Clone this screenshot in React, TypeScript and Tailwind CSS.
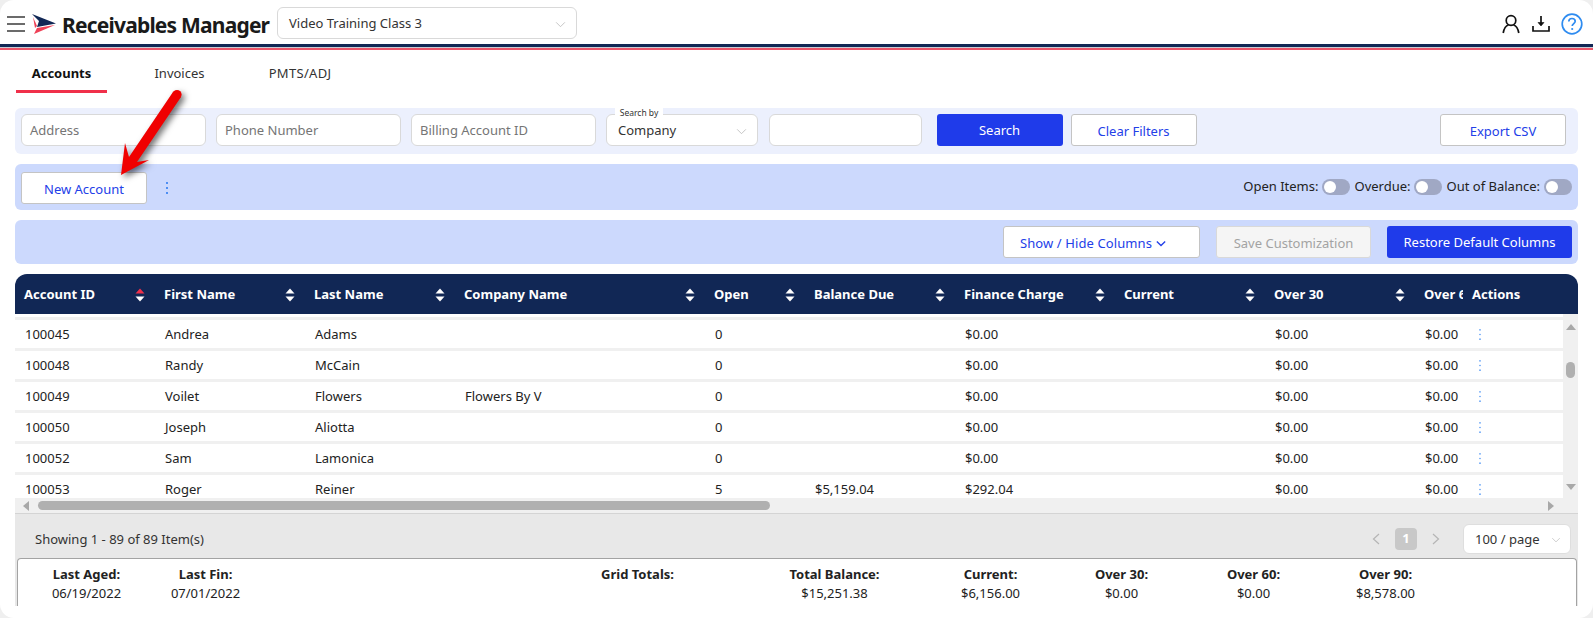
import React from "react";

const font = "font-['Noto_Sans','Open_Sans',sans-serif]";

const cols = [
  { label: "Account ID", w: "w-[140px]", active: true },
  { label: "First Name", w: "w-[150px]" },
  { label: "Last Name", w: "w-[150px]" },
  { label: "Company Name", w: "w-[250px]" },
  { label: "Open", w: "w-[100px]" },
  { label: "Balance Due", w: "w-[150px]" },
  { label: "Finance Charge", w: "w-[160px]" },
  { label: "Current", w: "w-[150px]" },
  { label: "Over 30", w: "w-[150px]" },
];

const rows = [
  ["100045", "Andrea", "Adams", "", "0", "", "$0.00", "", "$0.00", "$0.00"],
  ["100048", "Randy", "McCain", "", "0", "", "$0.00", "", "$0.00", "$0.00"],
  ["100049", "Voilet", "Flowers", "Flowers By V", "0", "", "$0.00", "", "$0.00", "$0.00"],
  ["100050", "Joseph", "Aliotta", "", "0", "", "$0.00", "", "$0.00", "$0.00"],
  ["100052", "Sam", "Lamonica", "", "0", "", "$0.00", "", "$0.00", "$0.00"],
  ["100053", "Roger", "Reiner", "", "5", "$5,159.04", "$292.04", "", "$0.00", "$0.00"],
];

function Chevron({ className = "" }: { className?: string }) {
  return (
    <svg viewBox="0 0 12 8" className={className} fill="none" stroke="currentColor" strokeWidth="1">
      <path d="M1 1.5 L6 6.5 L11 1.5" />
    </svg>
  );
}

function Sort({ active = false }: { active?: boolean }) {
  return (
    <svg viewBox="0 0 10 14" className="w-[10px] h-[14px] shrink-0">
      <path d="M5 0.5 L9.5 5.5 H0.5 Z" fill={active ? "#f0304a" : "#ffffff"} />
      <path d="M5 13.5 L9.5 8.5 H0.5 Z" fill="#ffffff" />
    </svg>
  );
}

function Dots({ color = "#5a9cf5", h = 14, r = 0.9 }: { color?: string; h?: number; r?: number }) {
  return (
    <svg viewBox="0 0 4 14" width="4" height={h} className="shrink-0">
      <circle cx="2" cy="2" r={r} fill={color} />
      <circle cx="2" cy="7" r={r} fill={color} />
      <circle cx="2" cy="12" r={r} fill={color} />
    </svg>
  );
}

function Toggle() {
  return (
    <div className="w-[28px] h-[16px] rounded-full bg-[#a0a8c4] flex items-center pl-[2px] shrink-0">
      <div className="w-[12px] h-[12px] rounded-full bg-white" />
    </div>
  );
}

function TextBox({ placeholder, w }: { placeholder?: string; w: string }) {
  return (
    <div className={`${w} h-[32px] pt-[2px] bg-white border border-[#d9d9d9] rounded-[6px] flex items-center px-[8px] text-[13px] text-[#757575] shrink-0`}>
      {placeholder}
    </div>
  );
}

function OutlineButton({ children, w, pt = "pt-[3px]" }: { children: React.ReactNode; w: string; pt?: string }) {
  return (
    <div className={`${w} ${pt} h-[32px] bg-white border border-[#c4c4c4] rounded-[3px] flex items-center justify-center text-[13px] text-[#2340e8] shrink-0`}>
      {children}
    </div>
  );
}

function Total({ label, value, ml }: { label: string; value?: string; ml: string }) {
  return (
    <div className={`${ml} w-[100px] shrink-0 text-center text-[13px] leading-[19px] text-[#222] whitespace-nowrap`}>
      <div className="font-bold">{label}</div>
      <div>{value}</div>
    </div>
  );
}

export default function App() {
  return (
    <div className="w-[1593px] h-[618px] bg-[#efefef]">
      <div className={`${font} relative w-[1593px] h-[618px] overflow-hidden bg-white text-[#222] rounded-[14px]`}>
        <header className="h-[44px] flex items-center">
          <div className="ml-[7px] mt-[4px] w-[18px] h-[16px] flex flex-col justify-between shrink-0">
            <div className="h-[2px] bg-[#6b6b6b]" />
            <div className="h-[2px] bg-[#6b6b6b]" />
            <div className="h-[2px] bg-[#6b6b6b]" />
          </div>
          <svg viewBox="0 0 24 20" className="ml-[7px] mt-[4px] w-[24px] h-[20px] shrink-0">
            <polygon points="0,0 24,9.5 5,13 7,7" fill="#112755" />
            <polygon points="1,3 5,12 3,14" fill="#ef4056" />
            <polygon points="5,14 23,11 2,20" fill="#ef4056" />
          </svg>
          <div className="ml-[6px] pt-[7px] text-[21px] font-bold text-[#1a1a1a] whitespace-nowrap tracking-[-0.8px] w-[208px] shrink-0">Receivables Manager</div>
          <div className="ml-[7px] mt-[2px] pt-[2px] w-[300px] h-[32px] border border-[#d9d9d9] rounded-[6px] flex items-center justify-between pl-[11px] pr-[10px] text-[13px] text-[#333] shrink-0">
            <span>Video Training Class 3</span>
            <Chevron className="w-[11px] h-[7px] text-[#bdbdbd]" />
          </div>
          <div className="ml-auto mt-[4px] flex items-center">
            <svg viewBox="0 0 18 20" className="w-[18px] h-[20px]" fill="none" stroke="#111" strokeWidth="1.7">
              <circle cx="9" cy="6.5" r="4.8" />
              <path d="M1.2 19 C2 14.5 4.5 11.5 6.5 11 M16.8 19 C16 14.5 13.5 11.5 11.5 11" />
            </svg>
            <svg viewBox="0 0 18 18" className="ml-[12px] w-[18px] h-[18px]" fill="none" stroke="#111" strokeWidth="1.7">
              <path d="M9 1 V10" />
              <path d="M6 7.5 L9 11 L12 7.5 Z" fill="#111" strokeWidth="0.6" />
              <path d="M1 11 V16 H17 V11" />
            </svg>
            <svg viewBox="0 0 22 22" className="ml-[11px] mr-[10px] w-[22px] h-[22px]" fill="none">
              <circle cx="11" cy="11" r="9.8" stroke="#2f8cf0" strokeWidth="1.7" />
              <path d="M7.8 8.6 C7.8 6.6 9.3 5.5 11 5.5 C12.8 5.5 14.2 6.7 14.2 8.3 C14.2 10.4 11.2 10.7 11.2 13" stroke="#2f8cf0" strokeWidth="1.7" />
              <circle cx="11.2" cy="16" r="1.1" fill="#2f8cf0" />
            </svg>
          </div>
        </header>
        <div className="h-[3px] bg-[#112755]" />
        <div className="h-[1px] bg-[#c8ccd4]" />
        <div className="h-[2px] bg-[#ec5468]" />

        <div className="ml-[16px] h-[43px] flex text-[13px] text-[#333]">
          <div className="w-[91px] pt-[8px] border-b-[3px] border-[#f0304a] flex items-center justify-center font-bold text-[#111]">Accounts</div>
          <div className="w-[145px] pt-[8px] pb-[3px] flex items-center justify-center">Invoices</div>
          <div className="w-[96px] pt-[8px] pb-[3px] flex items-center justify-center tracking-[0.3px]">PMTS/ADJ</div>
        </div>

        <div className="mx-[15px] mt-[15px] flex flex-col gap-[10px]">
          <div className="h-[46px] bg-[#ecf0fd] rounded-[6px] flex items-center pl-[6px] pr-[12px] pb-[2px]">
            <TextBox placeholder="Address" w="w-[185px]" />
            <div className="ml-[10px]"><TextBox placeholder="Phone Number" w="w-[185px]" /></div>
            <div className="ml-[10px]"><TextBox placeholder="Billing Account ID" w="w-[185px]" /></div>
            <div className="relative ml-[10px]">
              <div className="w-[152px] h-[32px] bg-white border border-[#d9d9d9] rounded-[6px] flex items-center justify-between pl-[11px] pr-[10px] pt-[2px] text-[13px] text-[#333]">
                <span>Company</span>
                <Chevron className="w-[11px] h-[7px] text-[#bdbdbd]" />
              </div>
              <div className="absolute left-[9px] top-[-6px] w-[48px] h-[10px] bg-white text-center text-[8.5px] leading-[10px] text-[#333] whitespace-nowrap">Search by</div>
            </div>
            <div className="ml-[10.5px]"><TextBox w="w-[153px]" /></div>
            <div className="ml-[15px] w-[126px] h-[32px] pt-[2px] bg-[#1f3bea] rounded-[3px] flex items-center justify-center text-[13px] text-white shrink-0">Search</div>
            <div className="ml-[8px]"><OutlineButton w="w-[126px]">Clear Filters</OutlineButton></div>
            <div className="ml-auto"><OutlineButton w="w-[126px]">Export CSV</OutlineButton></div>
          </div>

          <div className="h-[46px] bg-[#ccd9fd] rounded-[6px] flex items-center pl-[6px] pr-[6px] pt-[2px]">
            <OutlineButton w="w-[126px]">New Account</OutlineButton>
            <div className="ml-[18px]"><Dots color="#2f7cf0" h={16} r={1.1} /></div>
            <div className="ml-auto mb-[2px] flex items-center text-[13px] text-[#222]">
              <span className="mr-[4px]">Open Items:</span>
              <Toggle />
              <span className="ml-[4px] mr-[3px]">Overdue:</span>
              <Toggle />
              <span className="ml-[5px] mr-[4px]">Out of Balance:</span>
              <Toggle />
            </div>
          </div>

          <div className="h-[44px] bg-[#ccd9fd] rounded-[6px] flex items-center justify-end pr-[6px]">
            <div className="w-[197px] h-[32px] pt-[3px] pr-[17px] bg-white border border-[#c4c4c4] rounded-[3px] flex items-center justify-center gap-[4px] text-[13px] text-[#2340e8] tracking-[0.1px]">
              <span>Show / Hide Columns</span>
              <svg viewBox="0 0 12 8" className="w-[10px] h-[7px]" fill="none" stroke="currentColor" strokeWidth="1.6"><path d="M1 1.5 L6 6.5 L11 1.5" /></svg>
            </div>
            <div className="ml-[16px] w-[155px] h-[32px] pt-[3px] bg-[#f5f5f5] border border-[#d9d9d9] rounded-[3px] flex items-center justify-center text-[13px] text-[#a3a3a3]">Save Customization</div>
            <div className="ml-[16px] w-[185px] h-[32px] pt-[2px] bg-[#1f3bea] rounded-[3px] flex items-center justify-center text-[13px] text-white">Restore Default Columns</div>
          </div>

          <div className="flex flex-col">
            <div className="h-[40px] pt-[2px] bg-[#112755] rounded-t-[12px] flex items-center text-[13px] font-bold text-white pl-[1px]">
              {cols.map((c) => (
                <div key={c.label} className={`${c.w} pl-[8px] pr-[11px] flex items-center justify-between shrink-0`}>
                  <span className="whitespace-nowrap">{c.label}</span>
                  <Sort active={c.active} />
                </div>
              ))}
              <div className="w-[47px] pl-[8px] overflow-hidden whitespace-nowrap shrink-0">Over 60</div>
              <div className="pl-[9px]">Actions</div>
            </div>

            <div className="flex h-[199px]">
              <div className="flex-1 flex flex-col min-w-0">
                <div className="h-[184px] overflow-hidden pt-[3px] flex flex-col">
                  {rows.map((r) => (
                    <div key={r[0]} className="h-[31px] pt-[2px] shrink-0 border-t-[3px] border-[#f0f0f0] flex items-center text-[13px] text-[#222] pl-[1px]">
                      {cols.map((c, i) => (
                        <div key={c.label} className={`${c.w} pl-[9px] shrink-0 whitespace-nowrap`}>{r[i]}</div>
                      ))}
                      <div className="w-[47px] pl-[9px] overflow-hidden shrink-0 whitespace-nowrap">{r[9]}</div>
                      <div className="pl-[15px] mb-[2px] flex items-center"><Dots h={13} /></div>
                    </div>
                  ))}
                </div>
                <div className="h-[15px] bg-[#f0f0f0] flex items-center">
                  <svg viewBox="0 0 6 10" className="ml-[8px] w-[6px] h-[10px] shrink-0"><path d="M6 0 V10 L0 5 Z" fill="#a8a8a8" /></svg>
                  <div className="ml-[9px] w-[732px] h-[9px] rounded-full bg-[#b0b0b0]" />
                  <svg viewBox="0 0 6 10" className="ml-auto mr-[9px] w-[6px] h-[10px] shrink-0"><path d="M0 0 V10 L6 5 Z" fill="#a8a8a8" /></svg>
                </div>
              </div>
              <div className="w-[15px] shrink-0 bg-[#f0f0f0] flex flex-col items-center">
                <svg viewBox="0 0 10 6" className="mt-[10px] w-[10px] h-[6px] shrink-0"><path d="M0 6 H10 L5 0 Z" fill="#a8a8a8" /></svg>
                <div className="mt-[32px] w-[9px] h-[16px] rounded-full bg-[#b0b0b0] shrink-0" />
                <svg viewBox="0 0 10 6" className="mt-[106px] w-[10px] h-[6px] shrink-0"><path d="M0 0 H10 L5 6 Z" fill="#a8a8a8" /></svg>
              </div>
            </div>

            <div className="h-[45px] bg-[#e8e8e8] border-t border-[#d4d4d4] flex items-center pl-[20px] pr-[7px] text-[13px] text-[#333]">
              <span className="mt-[7px]">Showing 1 - 89 of 89 Item(s)</span>
              <div className="ml-auto flex items-center mt-[5px]">
                <svg viewBox="0 0 8 12" className="w-[8px] h-[12px]" fill="none" stroke="#b5b5b5" strokeWidth="1.2"><path d="M7 1 L1.5 6 L7 11" /></svg>
                <div className="ml-[15px] w-[22px] h-[22px] rounded-[4px] bg-[#c8c8c8] flex items-center justify-center text-white font-bold text-[13px]">1</div>
                <svg viewBox="0 0 8 12" className="ml-[15px] w-[8px] h-[12px]" fill="none" stroke="#b5b5b5" strokeWidth="1.2"><path d="M1 1 L6.5 6 L1 11" /></svg>
                <div className="ml-[23px] mt-[1px] w-[108px] h-[30px] pt-[2px] bg-white border border-[#dedede] rounded-[6px] flex items-center justify-between pl-[11px] pr-[9px] text-[#333]">
                  <span>100 / page</span>
                  <Chevron className="w-[10px] h-[6px] text-[#bdbdbd]" />
                </div>
              </div>
            </div>

            <div className="h-[48px] bg-[#e8e8e8]">
              <div className="ml-[1.5px] mr-[1.5px] h-[48px] bg-white border border-b-0 border-[#a3a3a3] rounded-t-[4px] flex pt-[6px]">
                <Total label="Last Aged:" value="06/19/2022" ml="ml-[19px]" />
                <Total label="Last Fin:" value="07/01/2022" ml="ml-[19px]" />
                <Total label="Grid Totals:" ml="ml-[332px]" />
                <Total label="Total Balance:" value="$15,251.38" ml="ml-[97px]" />
                <Total label="Current:" value="$6,156.00" ml="ml-[56px]" />
                <Total label="Over 30:" value="$0.00" ml="ml-[31px]" />
                <Total label="Over 60:" value="$0.00" ml="ml-[32px]" />
                <Total label="Over 90:" value="$8,578.00" ml="ml-[32px]" />
              </div>
            </div>
          </div>
        </div>

        <svg className="absolute left-[110px] top-[85px] w-[80px] h-[100px] overflow-visible" viewBox="110 85 80 100" style={{ filter: "drop-shadow(3px 3px 3px rgba(0,0,0,0.55))" }}>
          <polygon points="173,92 181,97 137,162 149,160 121,175 125,143 129,157" fill="#f00000" />
          <circle cx="177" cy="94.5" r="4.6" fill="#f00000" />
        </svg>
      </div>
    </div>
  );
}
